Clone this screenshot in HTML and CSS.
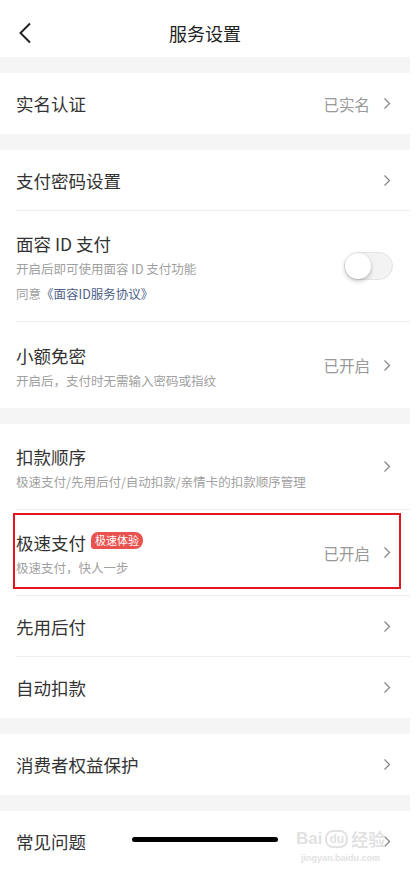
FILE: index.html
```html
<!DOCTYPE html>
<html lang="zh-CN">
<head>
  <meta charset="UTF-8" />
  <title>服务设置</title>
  <meta name="viewport" content="width=device-width, initial-scale=1.0" />
  <link rel="stylesheet" href="styles.css">
</head>
<body>
<div id="page">
  <div class="nav">
    <svg class="back" width="14" height="22" viewBox="0 0 14 22"><polyline points="12,1.5 2.5,11 12,20.5" fill="none" stroke="#222" stroke-width="2"/></svg>
    <h1>服务设置</h1>
  </div>

  <div class="gap"></div>
  <div class="group">
    <div class="cell">
      <div class="cell-main"><div class="title">实名认证</div></div>
      <span class="value">已实名</span>
      <svg class="arrow" width="8" height="13" viewBox="0 0 8 13"><polyline points="1.5,1.5 6.5,6.5 1.5,11.5" fill="none" stroke="#888" stroke-width="1.3"/></svg>
    </div>
  </div>

  <div class="gap"></div>
  <div class="group">
    <div class="cell">
      <div class="cell-main"><div class="title">支付密码设置</div></div>
      <svg class="arrow" width="8" height="13" viewBox="0 0 8 13"><polyline points="1.5,1.5 6.5,6.5 1.5,11.5" fill="none" stroke="#888" stroke-width="1.3"/></svg>
    </div>
    <div class="cell tall">
      <div class="cell-main">
        <div class="title">面容 ID 支付</div>
        <div class="sub">开启后即可使用面容 ID 支付功能</div>
        <div class="sub">同意<a class="link">《面容ID服务协议》</a></div>
      </div>
      <div class="switch"><span class="knob"></span></div>
    </div>
    <div class="cell tall">
      <div class="cell-main">
        <div class="title">小额免密</div>
        <div class="sub">开启后，支付时无需输入密码或指纹</div>
      </div>
      <span class="value">已开启</span>
      <svg class="arrow" width="8" height="13" viewBox="0 0 8 13"><polyline points="1.5,1.5 6.5,6.5 1.5,11.5" fill="none" stroke="#888" stroke-width="1.3"/></svg>
    </div>
  </div>

  <div class="gap"></div>
  <div class="group">
    <div class="cell tall">
      <div class="cell-main">
        <div class="title">扣款顺序</div>
        <div class="sub">极速支付/先用后付/自动扣款/亲情卡的扣款顺序管理</div>
      </div>
      <svg class="arrow" width="8" height="13" viewBox="0 0 8 13"><polyline points="1.5,1.5 6.5,6.5 1.5,11.5" fill="none" stroke="#888" stroke-width="1.3"/></svg>
    </div>
    <div class="cell tall marked">
      <div class="cell-main">
        <div class="title">极速支付<span class="badge">极速体验</span></div>
        <div class="sub">极速支付，快人一步</div>
      </div>
      <span class="value">已开启</span>
      <svg class="arrow" width="8" height="13" viewBox="0 0 8 13"><polyline points="1.5,1.5 6.5,6.5 1.5,11.5" fill="none" stroke="#888" stroke-width="1.3"/></svg>
      <div class="mark"></div>
    </div>
    <div class="cell">
      <div class="cell-main"><div class="title">先用后付</div></div>
      <svg class="arrow" width="8" height="13" viewBox="0 0 8 13"><polyline points="1.5,1.5 6.5,6.5 1.5,11.5" fill="none" stroke="#888" stroke-width="1.3"/></svg>
    </div>
    <div class="cell">
      <div class="cell-main"><div class="title">自动扣款</div></div>
      <svg class="arrow" width="8" height="13" viewBox="0 0 8 13"><polyline points="1.5,1.5 6.5,6.5 1.5,11.5" fill="none" stroke="#888" stroke-width="1.3"/></svg>
    </div>
  </div>

  <div class="gap"></div>
  <div class="group">
    <div class="cell">
      <div class="cell-main"><div class="title">消费者权益保护</div></div>
      <svg class="arrow" width="8" height="13" viewBox="0 0 8 13"><polyline points="1.5,1.5 6.5,6.5 1.5,11.5" fill="none" stroke="#888" stroke-width="1.3"/></svg>
    </div>
  </div>

  <div class="gap"></div>
  <div class="group">
    <div class="cell">
      <div class="cell-main"><div class="title">常见问题</div></div>
      <svg class="arrow" width="8" height="13" viewBox="0 0 8 13"><polyline points="1.5,1.5 6.5,6.5 1.5,11.5" fill="none" stroke="#888" stroke-width="1.3"/></svg>
    </div>
  </div>

  <div class="home-bar"></div>
  <div class="watermark">
    <div class="wm-logo"><span>Bai</span><span class="wm-du">du</span><span>经验</span></div>
    <div class="wm-url">jingyan.baidu.com</div>
  </div>
</div>
</body>
</html>
```

FILE: styles.css
```css
* {
  margin: 0;
  padding: 0;
  box-sizing: border-box;
}
html, body {
  width: 415px;
  height: 876px;
  overflow: hidden;
  background: #fff;
  font-family: "Noto Sans CJK SC", "Noto Sans", sans-serif;
  color: #333;
}
#page {
  position: relative;
  width: 410px;
  height: 876px;
  overflow: hidden;
  background: #fff;
}
.nav {
  height: 57px;
  display: flex;
  align-items: center;
  justify-content: center;
  position: relative;
}
.nav h1 {
  font-size: 18px;
  font-weight: 400;
  color: #222;
  margin-top: 9px;
}
.back {
  position: absolute;
  left: 18px;
  top: 22px;
}
.gap {
  height: 16px;
  background: #f5f5f5;
}
.group {
  padding-left: 16px;
}
.cell {
  display: flex;
  align-items: center;
  min-height: 61px;
  padding-right: 19px;
  border-bottom: 1px solid #efefef;
  position: relative;
}
.group .cell:last-child {
  border-bottom: none;
}
.cell.tall {
  min-height: 86px;
}
.cell-main {
  flex: 1;
}
.tall .cell-main {
  padding: 20px 0 15px;
}
.title {
  font-size: 17.5px;
  line-height: 25px;
  color: #333;
  display: flex;
  align-items: center;
}
.sub {
  font-size: 12.5px;
  line-height: 25px;
  color: #a0a0a0;
}
.link {
  color: #4d6189;
}
.value {
  font-size: 15.5px;
  color: #999;
  margin-right: 13px;
}
.arrow {
  display: block;
}
.switch {
  width: 49px;
  height: 28px;
  margin-right: -2px;
  border-radius: 14px;
  background: #f3f3f3;
  border: 1px solid #e3e3e3;
  position: relative;
}
.knob {
  position: absolute;
  left: 0;
  top: 0;
  width: 26px;
  height: 26px;
  border-radius: 50%;
  background: #fff;
  box-shadow: 0 2px 4px rgba(0, 0, 0, 0.25);
}
.badge {
  margin-left: 5px;
  padding: 0 4px;
  height: 17px;
  line-height: 17px;
  font-size: 11px;
  color: #fff;
  background: #e9534f;
  border-radius: 7px 8px 8px 3px;
  margin-top: -4px;
}
.mark {
  position: absolute;
  left: -3px;
  top: 3px;
  width: 388px;
  height: 76px;
  border: 2px solid #e3141e;
}
.home-bar {
  position: absolute;
  left: 132px;
  top: 837px;
  width: 146px;
  height: 5px;
  border-radius: 3px;
  background: #000;
}
.watermark {
  position: absolute;
  left: 296px;
  top: 826px;
  color: #e2e2e2;
  text-align: center;
}
.wm-logo {
  display: flex;
  align-items: center;
  gap: 3px;
  font-family: "Liberation Sans", "Noto Sans CJK SC", sans-serif;
  font-size: 17px;
  font-weight: bold;
}
.wm-du {
  font-size: 12px;
  border: 2px solid #e2e2e2;
  border-radius: 8px;
  padding: 0 2px;
}
.wm-url {
  font-family: "Liberation Sans", sans-serif;
  font-size: 9px;
  font-weight: bold;
  margin-top: 2px;
}
```
